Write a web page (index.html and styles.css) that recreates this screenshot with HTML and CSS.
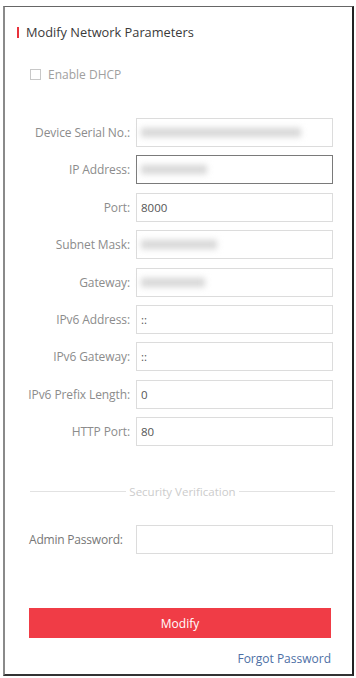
FILE: index.html
```html
<!DOCTYPE html>
<html>
<head>
<meta charset="utf-8">
<link rel="stylesheet" href="styles.css">
</head>
<body>
<div class="frame">
  <div class="title"><span class="mark"></span>Modify Network Parameters</div>
  <div class="dhcp"><span class="box"></span>Enable DHCP</div>
  <div class="form">
    <label class="lbl">Device Serial No.:</label>
    <div class="field"><span class="blur" style="width:160px"></span></div>
    <label class="lbl">IP Address:</label>
    <div class="field focus"><span class="blur" style="width:66px"></span></div>
    <label class="lbl">Port:</label>
    <div class="field">8000</div>
    <label class="lbl">Subnet Mask:</label>
    <div class="field"><span class="blur" style="width:76px"></span></div>
    <label class="lbl">Gateway:</label>
    <div class="field"><span class="blur" style="width:64px"></span></div>
    <label class="lbl">IPv6 Address:</label>
    <div class="field">::</div>
    <label class="lbl">IPv6 Gateway:</label>
    <div class="field">::</div>
    <label class="lbl">IPv6 Prefix Length:</label>
    <div class="field">0</div>
    <label class="lbl">HTTP Port:</label>
    <div class="field">80</div>
  </div>
  <div class="sep"><span class="line"></span><span class="septext">Security Verification</span><span class="line"></span></div>
  <div class="admin">
    <label class="albl">Admin Password:</label>
    <div class="field"></div>
  </div>
  <div class="btn">Modify</div>
  <div class="forgot">Forgot Password</div>
</div>
</body>
</html>
```
FILE: styles.css
```css
html, body {
  margin: 0;
  padding: 0;
  background: #fff;
  font-family: "Open Sans", "Liberation Sans", sans-serif;
}
.frame {
  box-sizing: border-box;
  margin: 6px 2px 0 3px;
  height: 670px;
  border-top: 1px solid #666;
  border-left: 2px solid #8a8a8a;
  border-right: 2px solid #222;
  border-bottom: 2px solid #333;
  display: flex;
  flex-direction: column;
}
.title {
  margin: 17px 0 0 12px;
  height: 16px;
  line-height: 16px;
  font-size: 12.8px;
  color: #3a3a3a;
  display: flex;
  align-items: center;
}
.mark {
  width: 2px;
  height: 11px;
  background: #e8323c;
  margin-right: 7px;
}
.dhcp {
  margin: 27px 0 0 25px;
  height: 14px;
  display: flex;
  align-items: center;
  font-size: 12px;
  color: #a0a0a0;
}
.box {
  width: 9px;
  height: 9px;
  border: 1px solid #c8c8c8;
  margin-right: 7px;
}
.form {
  margin-top: 37px;
  display: grid;
  grid-template-columns: 125px 197px;
  column-gap: 6px;
  row-gap: 8.4px;
}
.lbl {
  text-align: right;
  font-size: 12px;
  color: #8c8c8c;
  align-self: center;
  white-space: nowrap;
  letter-spacing: -0.1px;
}
.field {
  box-sizing: border-box;
  height: 29px;
  border: 1px solid #dcdcdc;
  display: flex;
  align-items: center;
  padding-left: 4px;
  font-size: 11.5px;
  color: #555;
}
.field.focus {
  border-color: #7a7a7a;
}
.blur {
  display: block;
  height: 9px;
  background: #d6d6d6;
  filter: blur(3px);
}
.sep {
  margin: 37px 0 0 25px;
  width: 305px;
  display: flex;
  align-items: center;
  height: 16px;
}
.line {
  flex: 1;
  height: 1px;
  background: #e2e2e2;
}
.septext {
  font-size: 11.5px;
  color: #cccccc;
  padding: 0 3px;
}
.admin {
  margin: 26px 0 0 24px;
  display: flex;
  align-items: center;
}
.albl {
  width: 107px;
  font-size: 12px;
  color: #777;
  white-space: nowrap;
  letter-spacing: -0.2px;
}
.admin .field {
  width: 197px;
}
.btn {
  margin: 54px 0 0 24px;
  width: 302px;
  height: 30px;
  background: #f03c46;
  color: #fff;
  font-size: 12px;
  display: flex;
  align-items: center;
  justify-content: center;
}
.forgot {
  margin: 12px 0 0 0;
  width: 326px;
  text-align: right;
  font-size: 12px;
  color: #4d6fa5;
}
```
